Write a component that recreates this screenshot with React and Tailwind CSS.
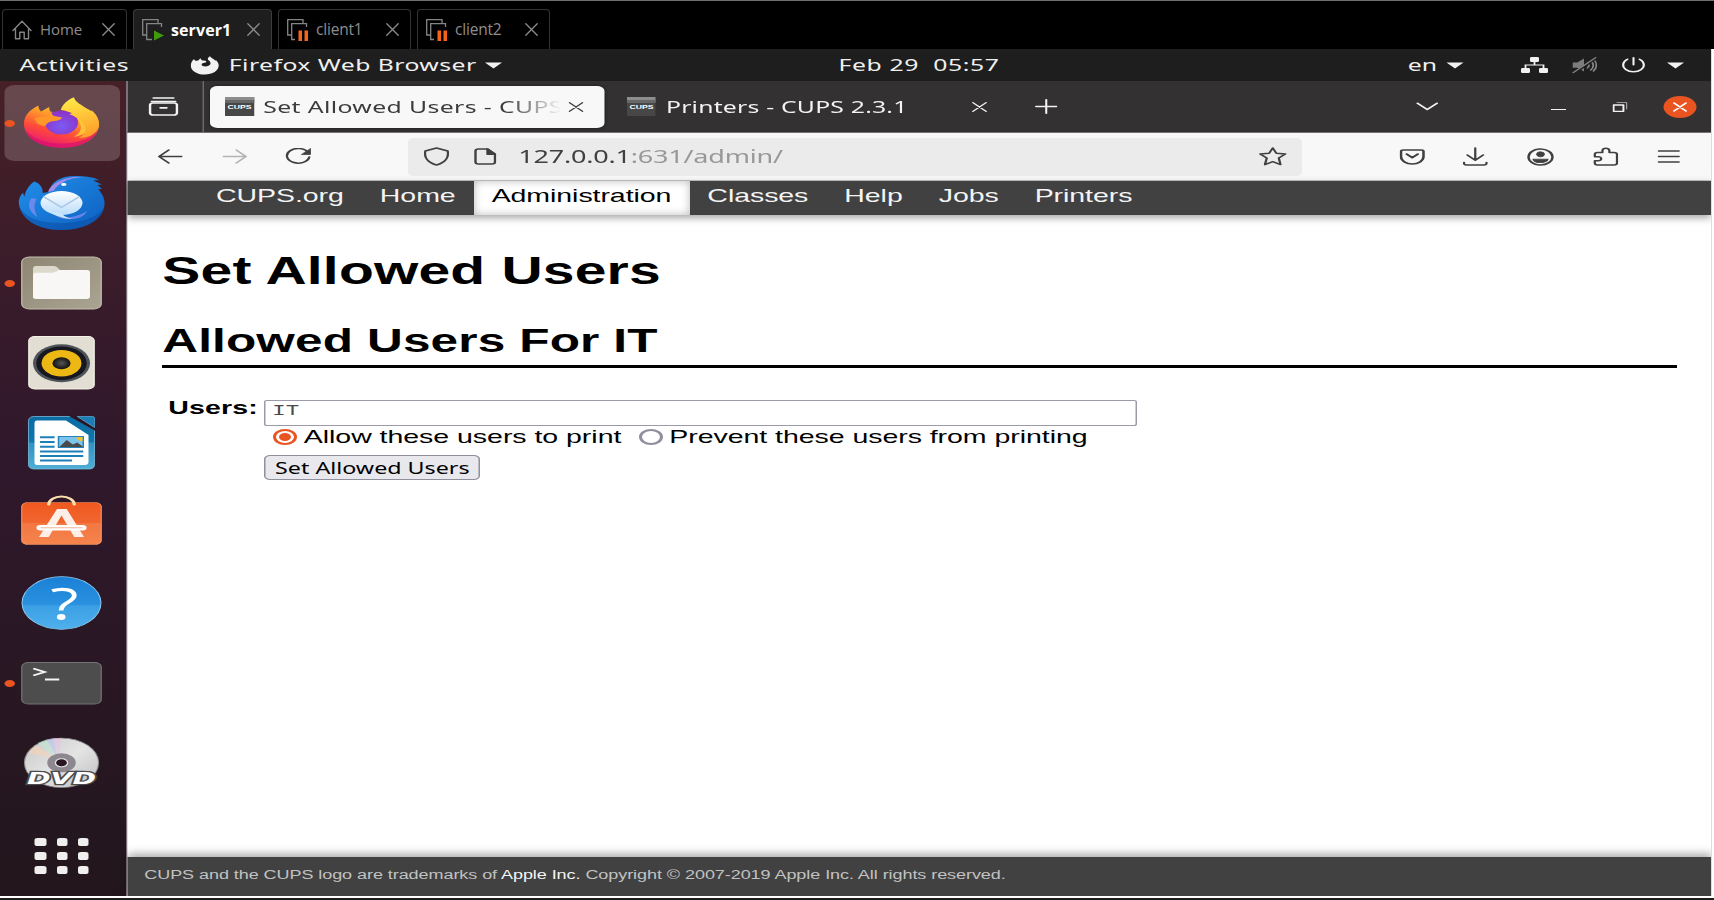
import React from "react";

const Stroke = ({ w, h, box, sw = 1.3, className = "", children }) => (
  <svg width={w} height={h} viewBox={box} fill="none" stroke="currentColor" strokeWidth={sw} strokeLinecap="round" strokeLinejoin="round" preserveAspectRatio="none" className={"block shrink-0 " + className}>
    {children}
  </svg>
);

const CloseGlyph = ({ className = "" }) => (
  <Stroke w="13" h="13" box="0 0 13 13" sw="1.3" className={className}>
    <path d="M.8.8l11.4 11.4M12.2.8L.8 12.2" />
  </Stroke>
);

const HomeGlyph = () => (
  <Stroke w="20" h="20" box="0 0 20 20" sw="1.4" className="text-[#858585]">
    <path d="M1 10.5L10 1.2l9 9.3M3.5 8.8v10h4.3v-6.5h4.4v6.5h4.3v-10" />
  </Stroke>
);

const VmGlyph = ({ running }) => (
  <svg width="22" height="22" viewBox="0 0 22 22" className="block shrink-0" fill="none">
    <path d="M4 16H.7V.7H16V4" stroke="#858585" strokeWidth="1.3" />
    <path d={running ? "M19.500 8V4.700H4.700V20.500H10" : "M19.500 8V4.700H4.700V20.500H8"} stroke="#858585" strokeWidth="1.3" />
    {running ? (
      <path d="M12 11.500v10L22 16.500z" fill="#3f9a0c" />
    ) : (
      <path d="M11.500 11.500h3.500v10.500h-3.500zM17.500 11.500h3.500v10.500h-3.500z" fill="#f4641c" />
    )}
  </svg>
);

function MachineTabs() {
  return (
    <div className="flex h-[49px] shrink-0 items-end border-t border-[#6e6e6e] bg-black font-['Open_Sans',sans-serif] text-[15px] text-[#8d8d8d]">
      <div className="ml-[2px] flex h-10 w-[125px] items-center rounded-t-[4px] border border-b-0 border-[#343434] pl-[9px]">
        <HomeGlyph />
        <span className="ml-2 w-[62px] tracking-[-0.1px]">Home</span>
        <CloseGlyph />
      </div>
      <div className="ml-[6px] flex h-10 w-[139px] items-center rounded-t-[4px] border border-b-0 border-[#3d3d3d] bg-[#1e1e1e] pl-[8px]">
        <VmGlyph running />
        <span className="ml-[7px] w-[76px] text-[16px] font-bold tracking-[0.1px] text-white">server1</span>
        <CloseGlyph />
      </div>
      <div className="ml-[6px] flex h-10 w-[133px] items-center rounded-t-[4px] border border-b-0 border-[#343434] pl-[8px]">
        <VmGlyph />
        <span className="ml-[7px] w-[70px] text-[15.500px] tracking-[-0.2px]">client1</span>
        <CloseGlyph />
      </div>
      <div className="ml-[6px] flex h-10 w-[133px] items-center rounded-t-[4px] border border-b-0 border-[#343434] pl-[8px]">
        <VmGlyph />
        <span className="ml-[7px] w-[70px] text-[15.500px] tracking-[-0.2px]">client2</span>
        <CloseGlyph />
      </div>
    </div>
  );
}

const Triangle = ({ className = "" }) => (
  <svg width="12" height="7" viewBox="0 0 12 7" className={"block shrink-0 " + className}>
    <path d="M.3.500h11.400L6 6.500z" fill="#f2f2f2" />
  </svg>
);

function TopBar() {
  return (
    <div className="flex h-8 shrink-0 items-center bg-[#1e1e1e] pl-[13px] text-[16.500px] leading-8 text-[#f0f0f0]">
      <span className="w-[113.500px] tracking-[0.45px]">Activities</span>
      <svg width="19" height="19" viewBox="0 0 19 19" className="block shrink-0">
        <path fill="#f2f2f2" d="M2.200 3.200L3.600 5l1.800-.7L6.500 2.300l1 1.900 2.300.6c1 .2 1 1.200.2 1.600L8 7.300c-1 .8-.8 2.500.8 3 1.700.5 4-.3 4.500-2.200.3-1.500-.5-3-1.500-4C11 2.600 12 1.300 13 .3c.5 1.700 2 2.200 3.300 4 .3.400.5.2.7 0 1.200 1.500 1.800 3.300 1.800 5.200 0 5-4 9-9.300 9S.2 14.700.2 9.700c0-2.500.6-4.800 2-6.500z" />
      </svg>
      <span className="ml-[7px] w-[170.500px] whitespace-nowrap tracking-[0.3px]">Firefox Web Browser</span>
      <Triangle />
      <span className="ml-[224px] w-[379.500px] whitespace-pre tracking-[0.42px]">Feb 29  05:57</span>
      <span className="w-[25px]">en</span>
      <Triangle />
      <svg width="18" height="16" viewBox="0 0 18 16" className="ml-[38px] block shrink-0">
        <path d="M9 4v3.500M3 11.500V8h12v3.500" fill="none" stroke="#f2f2f2" strokeWidth="1.200" />
        <rect x="6" width="6" height="5" rx="1" fill="#f2f2f2" />
        <rect y="11" width="6" height="5" rx="1" fill="#f2f2f2" />
        <rect x="12" y="11" width="6" height="5" rx="1" fill="#f2f2f2" />
      </svg>
      <svg width="17" height="17" viewBox="0 0 17 17" className="ml-[16.500px] block shrink-0" fill="none" stroke="#858585" strokeLinecap="round">
        <path d="M.5 5.500h3L8 1.500v13l-4.500-3.700h-3z" fill="#7c7c7c" stroke="none" />
        <path d="M10.300 6c1.200 1.500 1.200 3.500 0 5M12.500 4c2.200 2.500 2.200 6.500 0 9M14.800 3c2 3 2 8-.5 11" strokeWidth="1.200" />
        <path d="M1.500 16L16.500.8" stroke="#1e1e1e" strokeWidth="2" />
        <path d="M.8 15.700L15.800.6" strokeWidth="1.100" />
      </svg>
      <Stroke w="16" h="16" box="0 0 16 16" sw="1.4" className="ml-[16px]">
        <path d="M8 .8v7M4 2.200a6.900 6.900 0 1 0 8 0" />
      </Stroke>
      <Triangle className="ml-[14px]" />
    </div>
  );
}

const DockSlot = ({ running, active, children }) => (
  <div className="relative flex h-20 w-full shrink-0 items-center justify-center pr-[0.500px]">
    {active && <div className="absolute left-[3.300px] top-[2px] h-[76px] w-[76.500px] rounded-[7px] bg-white/18" />}
    {running && <div className="absolute left-[3.300px] top-[36.500px] h-[7px] w-[7px] rounded-full bg-[#e95420]" />}
    <svg width="60" height="60" viewBox="0 0 60 60" className="relative block overflow-visible">
      {children}
    </svg>
  </div>
);

function Dock() {
  return (
    <div className="flex h-full w-[84.500px] shrink-0 flex-col border-r border-[#7d727b] bg-linear-to-b from-[#462027] via-[#30182c] via-45% to-[#22161c] pr-[0.500px] pt-[2px]">
      <svg width="0" height="0" className="absolute">
        <defs>
          <linearGradient id="ffBody" x1=".8" y1="0" x2=".3" y2="1">
            <stop offset="0" stopColor="#ffe23d" /><stop offset=".35" stopColor="#ff9a2b" /><stop offset=".65" stopColor="#ff4a3a" /><stop offset="1" stopColor="#e8157a" />
          </linearGradient>
          <linearGradient id="ffTail" x1="0" y1="0" x2=".3" y2="1">
            <stop offset="0" stopColor="#fff04a" /><stop offset="1" stopColor="#ffa42c" />
          </linearGradient>
          <radialGradient id="ffGlobe" cx=".5" cy=".65" r=".65">
            <stop offset="0" stopColor="#7a5cf5" /><stop offset="1" stopColor="#8f2fc4" />
          </radialGradient>
          <linearGradient id="tbBody" x1="0" y1="0" x2="1" y2="1">
            <stop offset="0" stopColor="#2290ea" /><stop offset="1" stopColor="#0d5fc0" />
          </linearGradient>
          <linearGradient id="tbMail" x1="0" y1="0" x2="0" y2="1">
            <stop offset="0" stopColor="#ffffff" /><stop offset="1" stopColor="#b9dcfb" />
          </linearGradient>
          <linearGradient id="filesBg" x1="0" y1="0" x2="1" y2="1">
            <stop offset="0" stopColor="#8e8673" /><stop offset="1" stopColor="#aaa492" />
          </linearGradient>
          <radialGradient id="cone" cx=".5" cy=".5" r=".5">
            <stop offset="0" stopColor="#555" /><stop offset="1" stopColor="#111" />
          </radialGradient>
          <linearGradient id="writerBg" x1="0" y1="0" x2="0" y2="1">
            <stop offset="0" stopColor="#0b6ba3" /><stop offset=".49" stopColor="#1177ae" /><stop offset=".5" stopColor="#2f92c4" /><stop offset="1" stopColor="#50aed6" />
          </linearGradient>
          <linearGradient id="storeBg" x1="0" y1="0" x2="0" y2="1">
            <stop offset="0" stopColor="#f0581f" /><stop offset=".49" stopColor="#f16630" /><stop offset=".5" stopColor="#f37742" /><stop offset="1" stopColor="#f5844c" />
          </linearGradient>
          <linearGradient id="helpBg" x1="0" y1="0" x2="0" y2="1">
            <stop offset="0" stopColor="#1b80d6" /><stop offset=".54" stopColor="#2a92e0" /><stop offset=".55" stopColor="#3a9fe5" /><stop offset="1" stopColor="#50b0ec" />
          </linearGradient>
          <linearGradient id="disc" x1="0" y1="0" x2="1" y2="1">
            <stop offset="0" stopColor="#c6c6c6" /><stop offset=".5" stopColor="#e4e4e4" /><stop offset="1" stopColor="#bdbdc0" />
          </linearGradient>
        </defs>
      </svg>

      <DockSlot active running>
        <path fill="url(#ffBody)" d="M5 31c0-8 3-13.500 9.500-18.500.2 2.500.8 4.500 1.800 6l5.500-4.500c0 2.500.3 4 1.500 5.700L46 15c5 3 9 9 9 16.500C55 45 44 54.700 30 54.700S5 45 5 31z" />
        <path fill="#d9106f" opacity=".7" d="M6 37c5 9 14 13.500 24 13.500S50 46 54.500 36C52 48 42 54.700 30 54.700S8.500 48 6 37z" />
        <path fill="#ffd63a" opacity=".8" d="M36 18c9 3 13 9 12 16-1 6-5 9-10 10 4-3 6-8 4.500-13-1-5-3.500-9-6.500-13z" />
        <ellipse cx="30" cy="29.500" rx="11" ry="12" fill="url(#ffGlobe)" />
        <path fill="url(#ffTail)" d="M29.500 17c1-5.500 4.500-10 8.800-12.700 1 5 4 6.700 7 9.700 2.500 2.500 3.500 6 4.500 6 .4-1 .3-2 0-3 3.500 4 5.200 9 5.200 14 0 8-5.500 13.500-13.500 14 4-3 6-8 3-14-2.500-5-5.500-8-9.500-10l2.500-.8c-2-1.500-5-2.700-8-3.200z" />
        <path fill="#ff9829" d="M12 25.500c2.500-1.500 5-2 8-2.200.5-2.500 1.500-4 3.500-5-.3 2 .2 3.500 1.500 4.700l5.500 1.500c-.8 2.500-3 3.200-5.500 3.500-3 .3-4.800 2-5.800 5-4-.5-6.500-3-7.200-7.500z" />
      </DockSlot>
      <DockSlot>
        <path fill="url(#tbBody)" d="M1.500 28c.5-3 1-6 3-8.500 0 2 .3 3 .8 4C6 17 9 11 12 8.500c4 2.500 5.500 6 5.500 11.500l4-1C23 9 29 3 39 3c7 0 12 1 16 4l-4 .500 6 4-3 .5 3 4-2.500.3c2.500 4 4.200 9 4.200 13.700 0 16-13 27-29 27S1.500 45 1.500 28z" />
        <path fill="#0b4fa5" opacity=".55" d="M2 34c4 11 14 16 27 16 14 0 25-5 29.500-16C57 48 45 57 30 57S5 48 2 34z" />
        <path fill="#a58bea" d="M21 19c1-5 5-10 11-13 5-2.500 9-2.500 13-1.500-6 0-10 1.500-13 4-4 3-6 6-7 9z" />
        <path fill="#7d8cf0" opacity=".8" d="M10 25c-3 6-2 14 4 19-2-6-3-12-.5-18zM26 43c6 3 15 1 21-5-2 8-12 11-21 5z" />
        <ellipse cx="30" cy="30" rx="14" ry="12" fill="url(#tbMail)" />
        <path d="M18.500 24l11.500 10.500 11.500-10.500" fill="none" stroke="#a9c4e4" strokeWidth="1.200" />
        <path fill="#c9e5fd" d="M20 37c4 5 9 8 17 9-4-2-6-3-6-5z" />
        <ellipse cx="31.500" cy="11.500" rx="1.800" ry="1.400" fill="#fff" />
      </DockSlot>
      <DockSlot running>
        <rect x="3.500" y="4" width="53" height="52" rx="5" fill="url(#filesBg)" stroke="#c4bfae" strokeWidth=".8" />
        <path fill="#dcd8cb" d="M11 15.500c0-1.500.8-2.500 2-2.500h11.500c1.500 0 2 .5 2.800 1.500L29 17h5v8H11z" />
        <path fill="#f8f7f5" d="M11 22c0-1.500.8-2.200 2-2.200h11l2.500-1.300c1-.8 1.500-1.500 3-1.500H47c1.300 0 2 .8 2 2v24.500c0 1.500-.8 2.500-2 2.500H13c-1.200 0-2-.8-2-2z" />
      </DockSlot>
      <DockSlot>
        <rect x="8.200" y="3.500" width="43.600" height="52.500" rx="4" fill="#e3ded3" stroke="#f5f2ea" strokeWidth=".8" />
        <circle cx="30" cy="30.200" r="19" fill="#4d5358" />
        <circle cx="30" cy="30.200" r="16.800" fill="#17171f" />
        <circle cx="30" cy="30.200" r="13.300" fill="#edb813" />
        <circle cx="30" cy="30.200" r="6" fill="url(#cone)" />
      </DockSlot>
      <DockSlot>
        <path fill="url(#writerBg)" stroke="#7cc0e0" strokeWidth=".6" d="M12 3.500h25L52 17v35c0 2.500-1.500 4-3.500 4H12c-2.500 0-4-1.700-4-4V8c0-3 1.500-4.500 4-4.500z" />
        <path fill="#fff" d="M13.500 7.500H33l15 14.500v27c0 2-1 3-2.500 3h-32C12.500 52 12 51 12 49.500v-39c0-2 .5-3 1.500-3z" />
        <path d="M36 2.500l17 14.500" stroke="#2a1527" strokeWidth="2.200" />
        <path fill="#1b7db5" stroke="#5aa9d0" strokeWidth=".6" d="M40.500 3.500h10c1 0 1.500.5 1.500 1.500v9.500z" />
        <path stroke="#1c7fb9" strokeWidth="2" d="M15.700 24.200h9.700M15.700 29h9.700M15.700 33.800h9.700M15.700 38.500h28.800M15.700 43h28.800M15.700 47.500h21.300" />
        <rect x="28" y="23.500" width="16.500" height="11" fill="#7cc4ee" stroke="#2383ba" strokeWidth="1" />
        <path fill="#f3bf24" d="M40 24h4v4.500c-2-.5-4-2-4-4.500z" />
        <path fill="#4a4a4a" d="M28.500 34l5-7 4 4.500 3-2 4 4.500z" />
      </DockSlot>
      <DockSlot>
        <rect x="3.500" y="9.500" width="53" height="42" rx="4" fill="url(#storeBg)" stroke="#f79a6c" strokeWidth=".7" />
        <path d="M21.500 11.500c0-4.500 4-8 8.500-8s8.500 3.500 8.500 8" fill="none" stroke="#fbe0ae" strokeWidth="2.200" strokeLinecap="round" />
        <path fill="#fdeee7" d="M27 16h6.500L45 44h-6.500L30 22.500l-8.500 21.500H15z" />
        <rect x="13.300" y="32" width="33.400" height="5.500" rx="2.700" fill="#fff" />
        <path d="M16 34.800h28" stroke="#f3b49a" strokeWidth=".9" />
      </DockSlot>
      <DockSlot>
        <circle cx="30" cy="30" r="26.300" fill="url(#helpBg)" stroke="#8ccbf3" strokeWidth=".7" />
        <path d="M23.800 17.800c8-3 14.700-1 14.700 4.700 0 6.500-8.800 7-8.800 15" fill="none" stroke="#fff" strokeWidth="3.200" />
        <circle cx="29.800" cy="44" r="2.900" fill="#fff" />
      </DockSlot>
      <DockSlot running>
        <rect x="3.500" y="9.500" width="53" height="41.500" rx="4.500" fill="#4d4d4d" stroke="#747474" strokeWidth=".8" />
        <path d="M11.200 15.500l7.500 3.500-7.500 3.500M19 26.500h9.500" fill="none" stroke="#f4f4f4" strokeWidth="1.800" />
      </DockSlot>
      <DockSlot>
        <circle cx="30" cy="29.800" r="24.700" fill="url(#disc)" stroke="#8c8c8c" strokeWidth=".7" />
        <path fill="#bfe8d0" opacity=".6" d="M27 25L14 10l6-3.500z" />
        <path fill="#b9c8f0" opacity=".6" d="M27 24L20 6.500 25 5z" />
        <path fill="#e9c3e4" opacity=".6" d="M28 24L25 5h5z" />
        <path fill="#f5d3b4" opacity=".6" d="M26 26L8 20l5-8z" />
        <circle cx="30" cy="29.800" r="7" fill="none" stroke="#8d8790" strokeWidth="5" />
        <circle cx="30" cy="29.800" r="4" fill="#2a1524" stroke="#e8e8e8" strokeWidth=".8" />
        <text x="30" y="51" textAnchor="middle" textLength="46" lengthAdjust="spacingAndGlyphs" fontFamily="DejaVu Sans" fontWeight="700" fontStyle="italic" fontSize="16.500" fill="#fff" stroke="#4b4b4b" strokeWidth="2.400" paintOrder="stroke">DVD</text>
      </DockSlot>
      <div className="mt-[35px] grid grid-cols-[repeat(3,7.500px)] justify-center gap-x-[6.700px] gap-y-[6.700px] pr-[0.500px]">
        {Array.from({ length: 9 }, (_, i) => (
          <div key={i} className="h-[7.500px] rounded-[2px] bg-[#f0efed]" />
        ))}
      </div>
    </div>
  );
}

const CupsFavicon = () => (
  <svg width="19.500" height="19" viewBox="0 0 19.500 19" className="block shrink-0">
    <rect width="19.500" height="19" fill="#474747" />
    <rect width="19.500" height="5" fill="#8d8d8d" />
    <rect y="3" width="19.500" height="3" fill="#686868" />
    <text x="9.750" y="11.700" textAnchor="middle" textLength="16" lengthAdjust="spacingAndGlyphs" fontFamily="Liberation Sans" fontWeight="700" fontSize="6" fill="#fff">CUPS</text>
  </svg>
);

const TabX = ({ className = "" }) => (
  <Stroke w="10" h="10" box="0 0 10 10" sw="1.1" className={className}>
    <path d="M.6.6l8.800 8.800M9.400.6L.6 9.400" />
  </Stroke>
);

function BrowserTabs() {
  return (
    <div className="flex h-[52px] shrink-0 items-center border-b border-[#757374] bg-[#333132] text-[#f3f3f3]">
      <div className="flex h-full w-[51px] items-center border-r border-[#6b696a] pl-[14px]">
        <Stroke w="20" h="19" box="0 0 20 19" sw="1.7">
          <path d="M3.200 1h13.600M2 4.500h16" strokeWidth="1.300" />
          <rect x="1" y="6" width="18" height="12" rx="2" />
          <path d="M8 10.800h4" />
        </Stroke>
      </div>
      <div className="ml-[4.500px] flex h-[42px] w-[263px] items-center rounded-[5px] bg-[#f8f8f8] pl-[10px] text-[#3c3c3c] shadow-[0_0_3px_rgba(0,0,0,0.5)]">
        <CupsFavicon />
        <div className="ml-[6px] mt-px w-[198.500px] overflow-hidden whitespace-nowrap text-[16.500px] tracking-[0.26px] [mask-image:linear-gradient(to_right,#000_82%,transparent)]">Set Allowed Users - CUPS</div>
        <TabX className="ml-[5px]" />
      </div>
      <div className="ml-[14.500px] flex items-center">
        <CupsFavicon />
        <span className="ml-[7px] mt-px w-[203.500px] text-[16.500px] tracking-[0.14px]">Printers - CUPS 2.3.1</span>
        <TabX />
        <Stroke w="15" h="15" box="0 0 15 15" sw="1.4" className="ml-[32px]">
          <path d="M7.500.7v13.600M.7 7.500h13.600" />
        </Stroke>
      </div>
      <Stroke w="15" h="9" box="0 0 15 9" sw="1.5" className="ml-[239px]">
        <path d="M1 1.200l6.500 6.300L14 1.200" />
      </Stroke>
      <div className="ml-[75.500px] mt-[6px] h-px w-[10px] bg-[#f3f3f3]" />
      <Stroke w="10" h="10" box="0 0 10 10" sw="1.3" className="ml-[30.500px]">
        <path d="M.7 3h6.600v6.300H.7z" />
        <path d="M3 .6h6.500v6.500" strokeWidth=".8" opacity=".7" />
      </Stroke>
      <div className="ml-[24px] flex h-[22px] w-[22px] items-center justify-center rounded-full bg-[#e95420] text-white">
        <Stroke w="10" h="10" box="0 0 10 10" sw="1.4">
          <path d="M1 1l8 8M9 1L1 9" />
        </Stroke>
      </div>
    </div>
  );
}

function AddressBar() {
  return (
    <div className="flex h-12 shrink-0 items-center border-b border-[#c4c4c4] bg-[#f8f8f8] pl-[20px] text-[#404040]">
      <Stroke w="17" h="15" box="0 0 17 15" sw="1.4">
        <path d="M16 7.500H1.200M7.500 1L1 7.500 7.500 14" />
      </Stroke>
      <Stroke w="17" h="15" box="0 0 17 15" sw="1.3" className="ml-[26px] text-[#b4b4b4]">
        <path d="M1 7.500h14.800M9.500 1L16 7.500 9.500 14" />
      </Stroke>
      <Stroke w="18" h="17" box="0 0 18 17" sw="1.5" className="ml-[25.500px]">
        <path d="M15.500 4.500A7.500 7.300 0 1 0 16.200 9" />
        <path d="M17 .8v5.700h-5.800z" fill="currentColor" strokeWidth=".6" />
      </Stroke>
      <div className="ml-[63.500px] flex h-[38px] w-[596px] items-center rounded-[4px] bg-[#ebebeb] pl-[10px]">
        <Stroke w="18" h="19" box="0 0 18 19" sw="1.5">
          <path d="M9 1l7.500 3c.8 6-1.500 11.500-7.500 14C3 15.500.7 10 1.500 4z" />
        </Stroke>
        <Stroke w="15" h="17" box="0 0 15 17" sw="1.6" className="ml-[16.500px]">
          <path d="M3 1h6l5 5v8c0 1.300-.7 2-2 2H3c-1.300 0-2-.7-2-2V3c0-1.300.7-2 2-2z" />
          <path d="M9 1l5 5.300H9z" fill="currentColor" />
        </Stroke>
        <div className="ml-[14.500px] w-[493.500px] whitespace-nowrap text-[18px] tracking-[-0.14px]">
          127.0.0.1<span className="text-[#989898]">:631/admin/</span>
        </div>
        <Stroke w="19" h="19" box="0 0 19 19" sw="1.5">
          <path d="M9.500 1l2.400 5.300 6 .7-4.400 4 1.200 6.600-5.200-2.900-5.200 2.900L5.500 11 1.100 7l6-.7z" />
        </Stroke>
      </div>
      <Stroke w="17" h="16" box="0 0 17 16" sw="1.7" className="ml-[65px]">
        <path d="M2.500 1h12c.8 0 1.500.6 1.500 1.500V7.500a7.500 7.500 0 0 1-15 0V2.500C1 1.600 1.700 1 2.500 1z" />
        <path d="M4.800 5.200l3.700 3.500 3.700-3.500" />
      </Stroke>
      <Stroke w="17" h="19" box="0 0 17 19" sw="1.5" className="ml-[25.500px]">
        <path d="M8.500 1v12M3.200 8l5.300 5.300L13.800 8M1 15.500v.8c0 1 .7 1.700 1.700 1.700h11.600c1 0 1.700-.7 1.700-1.700v-.8" />
      </Stroke>
      <Stroke w="18" h="18" box="0 0 18 18" sw="1.6" className="ml-[26px]">
        <circle cx="9" cy="9" r="8" />
        <circle cx="9" cy="6.300" r="2.500" fill="currentColor" strokeWidth=".8" />
        <path d="M4 11.200h10c-.5 2.300-2.500 3.500-5 3.500s-4.500-1.200-5-3.500z" fill="currentColor" strokeWidth=".8" />
      </Stroke>
      <Stroke w="17" h="19" box="0 0 17 19" sw="1.5" className="ml-[25.500px]">
        <path d="M1.200 7.500c0-1.300.5-2 1.800-2h3.300V3.500a2.300 2.300 0 0 1 4.600 0v2H14c1.300 0 2 .7 2 2V16c0 1.300-.7 2-2 2H3c-1.200 0-1.800-.7-1.800-2v-2.300h2.300a2 2 0 0 0 0-4H1.200z" />
      </Stroke>
      <Stroke w="15" h="13" box="0 0 15 13" sw="1.3" className="ml-[26px]">
        <path d="M.7 1h13.600M.7 6.500h13.600M.7 12h13.600" />
      </Stroke>
    </div>
  );
}

const Radio = ({ checked }) =>
  checked ? (
    <span className="flex h-[16.500px] w-[16.500px] shrink-0 items-center justify-center rounded-full border-2 border-[#e95420] bg-white">
      <span className="h-[8px] w-[8px] rounded-full bg-[#e95420]" />
    </span>
  ) : (
    <span className="h-[16.500px] w-[16.500px] shrink-0 rounded-full border-2 border-[#8f8f9d] bg-white" />
  );

function CupsPage() {
  return (
    <div className="flex flex-1 flex-col bg-white font-['Liberation_Sans',Arial,sans-serif] text-[19px] text-black">
      <nav className="flex h-[34px] shrink-0 bg-[#414141] pl-[47.500px] leading-[30px] tracking-[-0.04px] text-[#f4f4f4] shadow-[0_3px_6px_rgba(0,0,0,0.35)]">
        <a className="px-3">CUPS.org</a>
        <a className="px-3">Home</a>
        <a className="bg-white px-3 text-black shadow-[inset_0_0_7px_rgba(0,0,0,0.28)]">Administration</a>
        <a className="px-3">Classes</a>
        <a className="px-3">Help</a>
        <a className="px-3">Jobs</a>
        <a className="px-3">Printers</a>
      </nav>
      <main className="flex flex-1 flex-col pl-[23.700px] pr-[23px]">
        <h1 className="mt-[34px] text-[38px] font-bold leading-[44px] tracking-[0.13px]">Set Allowed Users</h1>
        <h2 className="mt-[29px] h-[46px] whitespace-nowrap border-b-[3px] border-black text-[33px] font-bold leading-[38px] tracking-[0.1px]">Allowed Users For IT</h2>
        <div className="mt-[32px] flex">
          <div className="w-[67.800px] shrink-0 pl-[4px] font-bold leading-[16px] tracking-[0.1px]">Users:</div>
          <div className="flex flex-col items-start">
            <div className="h-[26px] w-[582px] rounded-[2px] border border-[#9a9aa8] bg-white pl-[4.500px] font-['Liberation_Mono',monospace] text-[15px] leading-[21px] text-[#4a4a4a]">IT</div>
            <div className="mt-px flex h-[20px] items-center pl-[6px]">
              <Radio checked />
              <span className="ml-[4px] w-[223.500px] leading-[18px] tracking-[-0.02px]">Allow these users to print</span>
              <Radio />
              <span className="ml-[3.700px] whitespace-nowrap leading-[18px] tracking-[-0.03px]">Prevent these users from printing</span>
            </div>
            <button className="mt-[8px] h-[25px] w-[144.500px] whitespace-nowrap rounded-[4px] border border-[#8f8f9d] bg-[#e9e9ed] font-['Noto_Sans',sans-serif] text-[15.500px] leading-[22px]">Set Allowed Users</button>
          </div>
        </div>
      </main>
      <footer className="h-[39px] shrink-0 whitespace-nowrap bg-[#414141] pl-[11.700px] text-[12px] leading-[36px] tracking-[-0.04px] text-[#c2c2c2] shadow-[0_-3px_7px_rgba(0,0,0,0.35)]">
        CUPS and the CUPS logo are trademarks of <a className="text-[#f5f5f5]">Apple Inc.</a> Copyright © 2007-2019 Apple Inc. All rights reserved.
      </footer>
    </div>
  );
}

export default function App() {
  return (
    <div className="flex h-[900px] w-[1714px] flex-col overflow-hidden bg-white">
      <MachineTabs />
      <div className="h-[847px] w-[1712px] shrink-0 overflow-hidden border-r border-[#dddddd]">
        <div className="flex h-[847px] w-[1141px] origin-left scale-x-[1.5] flex-col font-['Noto_Sans',sans-serif]">
          <TopBar />
          <div className="flex min-h-0 flex-1">
            <Dock />
            <div className="flex min-w-0 flex-1 flex-col">
              <BrowserTabs />
              <AddressBar />
              <CupsPage />
            </div>
          </div>
        </div>
      </div>
      <div className="mt-[2px] h-[2px] shrink-0 bg-[#1c1c1c]" />
    </div>
  );
}
